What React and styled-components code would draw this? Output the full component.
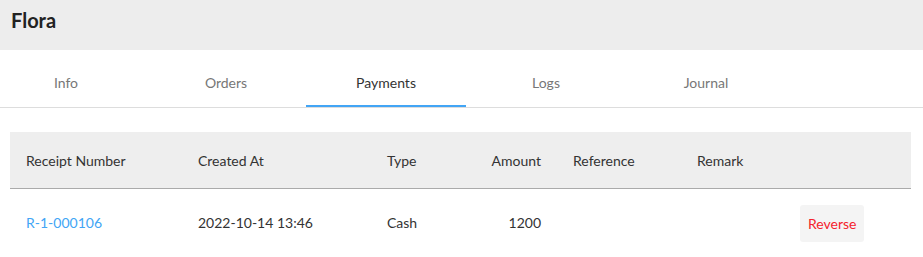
import React, { useState } from "react";
import styled, { createGlobalStyle } from "styled-components";

const GlobalStyle = createGlobalStyle`
  body {
    margin: 0;
    background: #ffffff;
    font-family: Lato, "Open Sans", sans-serif;
    color: #333333;
  }
`;

const tabs = ["Info", "Orders", "Payments", "Logs", "Journal"];

const columns = [
  { key: "receipt", label: "Receipt Number" },
  { key: "createdAt", label: "Created At" },
  { key: "type", label: "Type" },
  { key: "amount", label: "Amount", align: "right" },
  { key: "reference", label: "Reference" },
  { key: "remark", label: "Remark" },
  { key: "action", label: "" },
];

const payments = [
  {
    id: 106,
    receipt: "R-1-000106",
    createdAt: "2022-10-14 13:46",
    type: "Cash",
    amount: 1200,
    reference: "",
    remark: "",
  },
];

function App() {
  const [active, setActive] = useState("Payments");

  return (
    <Page>
      <GlobalStyle />
      <Header>
        <Title>Flora</Title>
      </Header>
      <TabBar>
        <TabList>
          {tabs.map((tab) => (
            <Tab
              key={tab}
              $active={tab === active}
              onClick={() => setActive(tab)}
            >
              {tab}
            </Tab>
          ))}
        </TabList>
      </TabBar>
      <Content>
        <Table>
          <HeadRow>
            {columns.map((col) => (
              <HeadCell key={col.key} $align={col.align}>
                {col.label}
              </HeadCell>
            ))}
          </HeadRow>
          {payments.map((p) => (
            <Row key={p.id}>
              <Cell>
                <ReceiptLink href="#">{p.receipt}</ReceiptLink>
              </Cell>
              <Cell>{p.createdAt}</Cell>
              <Cell>{p.type}</Cell>
              <Cell $align="right">{p.amount}</Cell>
              <Cell>{p.reference}</Cell>
              <Cell>{p.remark}</Cell>
              <Cell>
                <ReverseButton>Reverse</ReverseButton>
              </Cell>
            </Row>
          ))}
        </Table>
      </Content>
    </Page>
  );
}

export default App;

const Page = styled.div`
  width: 923px;
  min-height: 257px;
  overflow: hidden;
`;

const Header = styled.header`
  box-sizing: border-box;
  height: 50px;
  padding: 8px 11px 0;
  background: #ededed;
`;

const Title = styled.h1`
  margin: 0;
  font-size: 20px;
  font-weight: 700;
  line-height: 1.2;
  color: #222222;
`;

const TabBar = styled.nav`
  border-bottom: 1px solid #dddddd;
  overflow: hidden;
`;

const TabList = styled.div`
  display: flex;
  margin-left: -14px;
`;

const Tab = styled.button`
  box-sizing: border-box;
  flex: 0 0 160px;
  height: 57px;
  padding: 11px 0 0;
  border: none;
  border-bottom: 2px solid ${(p) => (p.$active ? "#42a5f5" : "transparent")};
  background: none;
  font-family: inherit;
  font-size: 14px;
  line-height: 1.2;
  text-align: center;
  color: ${(p) => (p.$active ? "#333333" : "#777777")};
  cursor: pointer;
`;

const Content = styled.main`
  padding: 24px 12px 0 10px;
`;

const Table = styled.div`
  display: grid;
  grid-template-columns: 172px 189px 91px 95px 124px 103px 1fr;
`;

const HeadRow = styled.div`
  display: contents;
`;

const HeadCell = styled.div`
  box-sizing: border-box;
  display: flex;
  align-items: center;
  justify-content: ${(p) => (p.$align === "right" ? "flex-end" : "flex-start")};
  height: 57px;
  padding: 2px 16px 0;
  background: #eeeeee;
  border-bottom: 1px solid #aaaaaa;
  font-size: 14px;
  line-height: 1.2;
  color: #333333;
`;

const Row = styled.div`
  display: contents;
`;

const Cell = styled.div`
  display: flex;
  align-items: center;
  justify-content: ${(p) => (p.$align === "right" ? "flex-end" : "flex-start")};
  min-height: 37px;
  padding: 16px;
  font-size: 14px;
  line-height: 1.2;
  color: #333333;
`;

const ReceiptLink = styled.a`
  color: #42a5f5;
  text-decoration: none;
`;

const ReverseButton = styled.button`
  box-sizing: border-box;
  height: 37px;
  padding: 0 8px;
  border: none;
  border-radius: 3px;
  background: #f4f4f4;
  font-family: inherit;
  font-size: 14px;
  color: #f5222d;
  cursor: pointer;
`;
